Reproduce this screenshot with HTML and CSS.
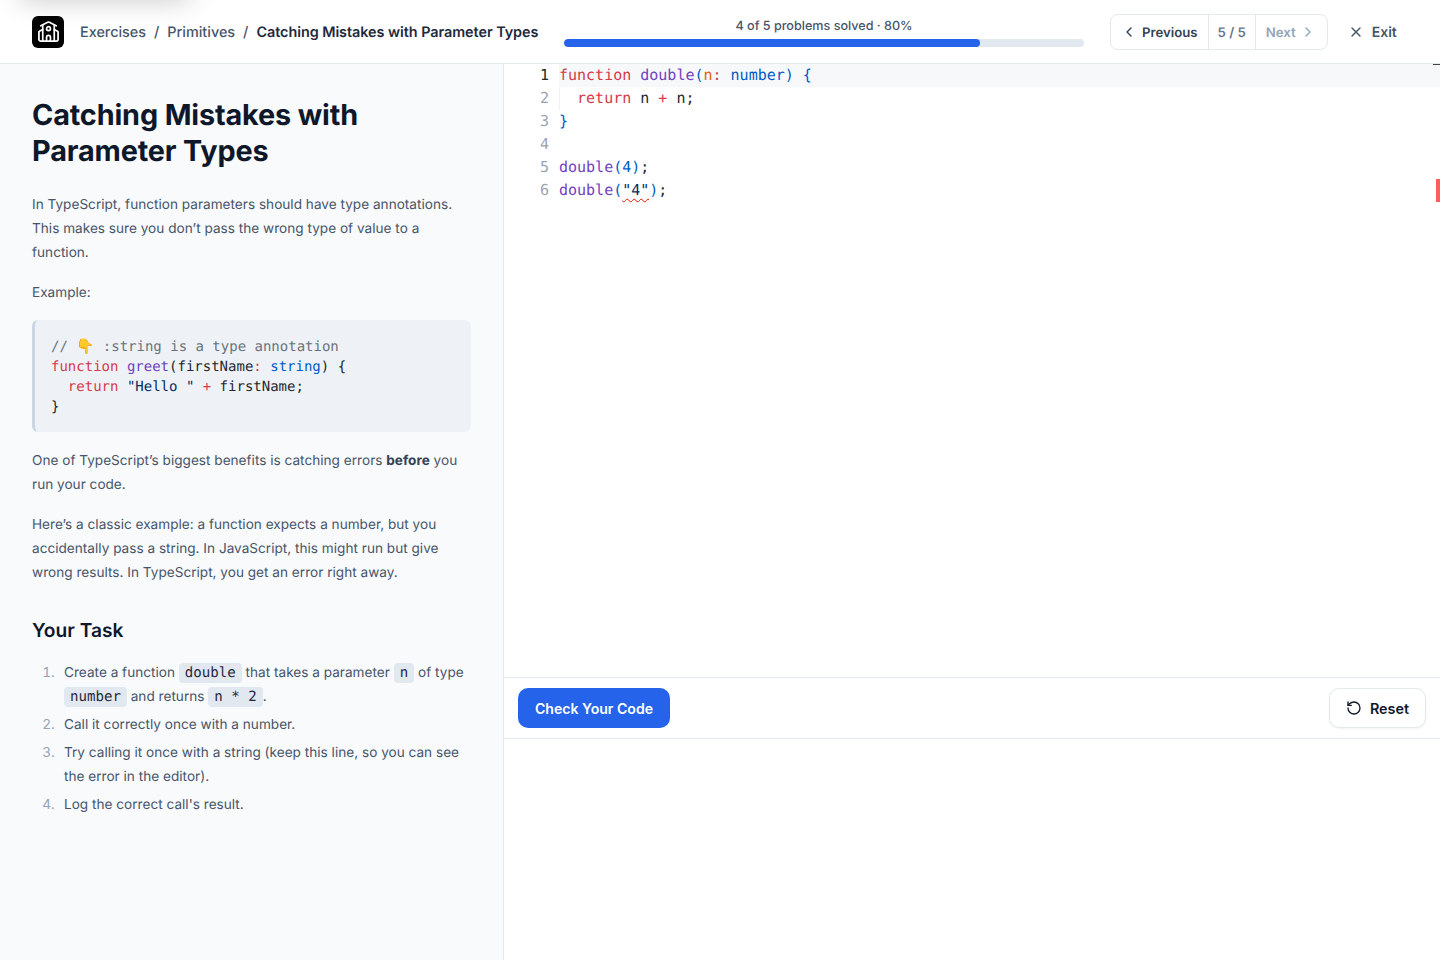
FILE: index.html
```html
<!DOCTYPE html>
<html lang="en">
<head>
    <meta charset="UTF-8">
    <meta name="viewport" content="width=device-width, initial-scale=1.0">
    <title>Catching Mistakes with Parameter Types</title>
    <link rel="stylesheet" href="styles.css">
</head>
<body>
    <div class="corner-blur"></div>

    <!-- Top Bar -->
    <header class="topbar">
        <div class="topbar-left">
            <div class="logo">
                <svg width="23" height="23" viewBox="0 0 24 24" fill="none" stroke="white" stroke-width="1.8" stroke-linecap="round" stroke-linejoin="round">
                    <path d="M14 22v-4a2 2 0 1 0-4 0v4"/>
                    <path d="m18 10 3.447 1.724a1 1 0 0 1 .553.894V20a2 2 0 0 1-2 2H4a2 2 0 0 1-2-2v-7.382a1 1 0 0 1 .553-.894L6 10"/>
                    <path d="M18 5v17"/>
                    <path d="m4 6 7.106-3.553a2 2 0 0 1 1.788 0L20 6"/>
                    <path d="M6 5v17"/>
                    <circle cx="12" cy="9" r="2"/>
                </svg>
            </div>
            <nav class="crumbs">
                <a href="#">Exercises</a>
                <span class="sep">/</span>
                <a href="#">Primitives</a>
                <span class="sep">/</span>
                <span class="current">Catching Mistakes with Parameter Types</span>
            </nav>
        </div>

        <div class="progress">
            <div class="progress-label">4 of 5 problems solved · 80%</div>
            <div class="progress-track"><div class="progress-fill" style="width: 80%"></div></div>
        </div>

        <div class="pager">
            <a href="#" class="pager-btn">
                <svg width="16" height="16" viewBox="0 0 24 24" fill="none" stroke="currentColor" stroke-width="2" stroke-linecap="round" stroke-linejoin="round"><path d="m15 18-6-6 6-6"/></svg>
                <span class="label">Previous</span>
            </a>
            <span class="pager-count">5 / 5</span>
            <a href="#" class="pager-btn disabled">
                <span class="label">Next</span>
                <svg width="16" height="16" viewBox="0 0 24 24" fill="none" stroke="currentColor" stroke-width="2" stroke-linecap="round" stroke-linejoin="round"><path d="m9 18 6-6-6-6"/></svg>
            </a>
        </div>

        <a href="#" class="exit">
            <svg width="16" height="16" viewBox="0 0 24 24" fill="none" stroke="currentColor" stroke-width="2" stroke-linecap="round" stroke-linejoin="round"><path d="M18 6 6 18"/><path d="m6 6 12 12"/></svg>
            <span class="label">Exit</span>
        </a>
    </header>

    <main class="layout">
        <!-- Lesson -->
        <section class="lesson">
            <h1>Catching Mistakes with Parameter Types</h1>
            <p>In TypeScript, function parameters should have type annotations. This makes sure you don’t pass the wrong type of value to a function.</p>
            <p>Example:</p>
<pre class="code-block"><span class="c">// <span class="emoji">👇</span> :string is a type annotation</span>
<span class="k">function</span> <span class="f">greet</span>(firstName<span class="k">:</span> <span class="t">string</span>) {
  <span class="k">return</span> <span class="s">"Hello "</span> <span class="k">+</span> firstName;
}</pre>
            <p>One of TypeScript’s biggest benefits is catching errors <strong>before</strong> you run your code.</p>
            <p>Here’s a classic example: a function expects a number, but you accidentally pass a string. In JavaScript, this might run but give wrong results. In TypeScript, you get an error right away.</p>

            <h2>Your Task</h2>
            <ol class="task-list">
                <li>Create a function <code>double</code> that takes a parameter <code>n</code> of type <code>number</code> and returns <code>n * 2</code>.</li>
                <li>Call it correctly once with a number.</li>
                <li>Try calling it once with a string (keep this line, so you can see the error in the editor).</li>
                <li>Log the correct call's result.</li>
            </ol>
        </section>

        <!-- Editor -->
        <section class="workspace">
            <div class="editor">
                <div class="ruler-mark"></div>
                <div class="line active"><span class="num">1</span><span class="src"><span class="k">function</span> <span class="f">double</span><span class="t">(</span><span class="p">n</span><span class="k">:</span> <span class="t">number)</span> <span class="t">{</span></span></div>
                <div class="line"><span class="num">2</span><span class="src guide">  <span class="k">return</span> n <span class="k">+</span> n;</span></div>
                <div class="line"><span class="num">3</span><span class="src"><span class="t">}</span></span></div>
                <div class="line"><span class="num">4</span><span class="src"></span></div>
                <div class="line"><span class="num">5</span><span class="src"><span class="f">double</span><span class="t">(4)</span>;</span></div>
                <div class="line"><span class="num">6</span><span class="src"><span class="f">double</span><span class="t">(</span><span class="s squiggle">"4"</span><span class="t">)</span>;</span></div>
            </div>

            <div class="actions">
                <button class="btn-check">Check Your Code</button>
                <button class="btn-reset">
                    <svg width="16" height="16" viewBox="0 0 24 24" fill="none" stroke="currentColor" stroke-width="2" stroke-linecap="round" stroke-linejoin="round"><path d="M3 12a9 9 0 1 0 9-9 9.75 9.75 0 0 0-6.74 2.74L3 8"/><path d="M3 3v5h5"/></svg>
                    Reset
                </button>
            </div>

            <div class="output"></div>
        </section>
    </main>
</body>
</html>
```

FILE: styles.css
```css
* {
    box-sizing: border-box;
}
body {
    margin: 0;
    height: 960px;
    overflow: hidden;
    display: flex;
    flex-direction: column;
    background: white;
    font-family: Inter, "Liberation Sans", sans-serif;
    color: #0f172a;
    text-rendering: geometricPrecision;
}
a {
    text-decoration: none;
    color: inherit;
}

/* stray blurred shadow in the top corner */
.corner-blur {
    position: absolute;
    top: -26px;
    left: 20px;
    width: 170px;
    height: 26px;
    box-shadow: 0 0 28px rgba(0, 0, 0, 0.22);
    pointer-events: none;
}

/* Top Bar */
.topbar {
    height: 64px;
    flex: none;
    display: flex;
    align-items: center;
    padding: 0 26px 0 32px;
    border-bottom: 1px solid #e2e8f0;
}
.topbar-left {
    display: flex;
    align-items: center;
    gap: 16px;
    width: 532px;
}
.logo {
    width: 32px;
    height: 32px;
    background: black;
    border-radius: 6px;
    display: flex;
    align-items: center;
    justify-content: center;
}
.crumbs {
    display: flex;
    gap: 8px;
    padding-top: 2px;
    font-size: 14.4px;
    font-weight: 500;
    color: #475569;
    white-space: nowrap;
}
.crumbs .current {
    font-weight: 600;
    letter-spacing: -0.05px;
    color: #1e293b;
}
.progress {
    width: 520px;
    margin-top: 3px;
}
.progress-label {
    font-size: 12.6px;
    font-weight: 500;
    line-height: 16px;
    text-align: center;
    color: #475569;
    margin-bottom: 4px;
}
.progress-track {
    height: 8px;
    background: #e2e8f0;
    border-radius: 4px;
    overflow: hidden;
}
.progress-fill {
    height: 100%;
    background: #2563eb;
    border-radius: 4px;
}
.pager {
    margin-left: 26px;
    height: 36px;
    display: flex;
    align-items: stretch;
    border: 1px solid #e2e8f0;
    border-radius: 8px;
    font-size: 13.2px;
    font-weight: 600;
    color: #334155;
}
.label {
    padding-top: 2px;
}
.pager-btn {
    display: flex;
    align-items: center;
    gap: 5px;
    padding: 0 10px;
}
.pager-btn.disabled {
    gap: 4px;
    padding-right: 11px;
    color: #94a3b8;
}
.pager-count {
    display: flex;
    align-items: center;
    padding: 2px 9px 0;
    color: #64748b;
    border-left: 1px solid #e2e8f0;
    border-right: 1px solid #e2e8f0;
}
.exit {
    margin-left: 20px;
    display: flex;
    align-items: center;
    gap: 8px;
    font-size: 14px;
    font-weight: 600;
    color: #475569;
}

/* Main Layout */
.layout {
    flex: 1;
    display: flex;
    min-height: 0;
}
.lesson {
    width: 504px;
    flex: none;
    padding: 32px 32px 0;
    background: #f8fafc;
    border-right: 1px solid #e2e8f0;
    font-size: 13.6px;
    line-height: 24px;
    letter-spacing: 0.01px;
    color: #475569;
}
.lesson h1 {
    margin: 0 0 23px;
    padding-top: 1px;
    font-size: 28.8px;
    line-height: 36px;
    font-weight: 700;
    letter-spacing: -0.14px;
    color: #0f172a;
}
.lesson h2 {
    margin: 31px 0 16px;
    font-size: 19.2px;
    line-height: 28px;
    font-weight: 600;
    letter-spacing: 0;
    color: #0f172a;
}
.lesson p {
    margin: 0 0 15px;
    padding-top: 1px;
}
.lesson strong {
    font-weight: 700;
    color: #334155;
}
.code-block {
    margin: 0 0 16px;
    padding: 17px 16px 15px;
    background: #eef2f7;
    border-left: 3px solid #cbd5e1;
    border-radius: 6px;
    font-family: "DejaVu Sans Mono", monospace;
    font-size: 14px;
    line-height: 20px;
    letter-spacing: 0;
    color: #24292e;
}
.emoji {
    font-size: 14.5px;
    line-height: 0;
}
.task-list {
    margin: 0;
    padding: 1px 0 0 32px;
}
.task-list li {
    margin-bottom: 4px;
}
.task-list li::marker {
    content: counter(list-item) ".\2002\2009";
    color: #94a3b8;
}
.task-list code {
    font-family: "DejaVu Sans Mono", monospace;
    font-size: 14.08px;
    line-height: 20px;
    padding: 2px 6px;
    background: #e2e8f0;
    border-radius: 4px;
    letter-spacing: 0;
    color: #1e293b;
}

/* Syntax Colours */
.k { color: #d73a49; }
.f { color: #6f42c1; }
.t { color: #005cc5; }
.s { color: #032f62; }
.p { color: #e36209; }
.c { color: #6a737d; }

/* Editor */
.workspace {
    flex: 1;
    min-width: 0;
    display: flex;
    flex-direction: column;
}
.editor {
    position: relative;
    height: 613px;
    flex: none;
    font-family: "DejaVu Sans Mono", monospace;
    font-size: 15px;
    line-height: 23px;
    color: #24292e;
}
.line {
    display: flex;
    height: 23px;
}
.num {
    width: 55px;
    flex: none;
    padding-right: 10px;
    text-align: right;
    color: #9ca3af;
}
.src {
    flex: 1;
    white-space: pre;
}
.line.active .num {
    color: #24292e;
}
.line.active .src {
    background: #f6f8fa;
}
.src.guide {
    box-shadow: inset 1px 0 0 #eff1f3;
}
.squiggle {
    text-decoration: underline wavy #e51400 1px;
    text-underline-offset: 3px;
}
.ruler-mark {
    position: absolute;
    right: 0;
    top: 115px;
    width: 4px;
    height: 23px;
    background: #ff5c5c;
}
.ruler-mark::before {
    content: "";
    position: absolute;
    top: -115px;
    right: 0;
    width: 7px;
    height: 1px;
    background: #444;
}

/* Action Bar */
.actions {
    height: 62px;
    flex: none;
    display: flex;
    align-items: center;
    justify-content: space-between;
    padding: 0 14px;
    border-top: 1px solid #e2e8f0;
    border-bottom: 1px solid #e2e8f0;
}
.btn-check {
    height: 40px;
    width: 152px;
    padding: 0;
    border: none;
    border-radius: 10px;
    background: #2563eb;
    color: white;
    font-family: inherit;
    font-size: 14.08px;
    font-weight: 600;
}
.btn-reset {
    height: 40px;
    width: 97px;
    display: flex;
    align-items: center;
    justify-content: center;
    gap: 8px;
    background: white;
    border: 1px solid #e2e8f0;
    border-radius: 10px;
    box-shadow: 0 1px 2px rgba(0, 0, 0, 0.05);
    color: #0f172a;
    font-family: inherit;
    font-size: 14.4px;
    font-weight: 600;
}
.output {
    flex: 1;
    background: white;
}
```
